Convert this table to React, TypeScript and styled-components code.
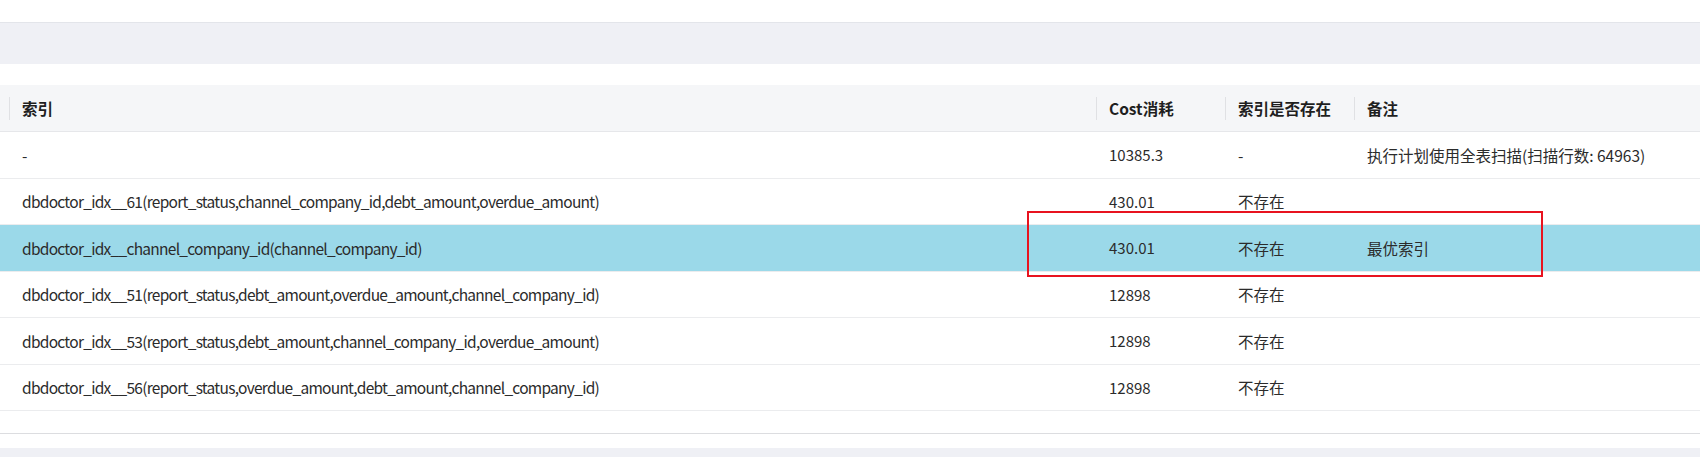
import React from "react";
import styled, { createGlobalStyle } from "styled-components";

const GlobalStyle = createGlobalStyle`
  html, body { margin: 0; padding: 0; background: #ffffff; }
  body {
    font-family: "Noto Sans CJK SC", "Noto Sans", sans-serif;
    color: #333333;
    width: 1700px;
    overflow: hidden;
  }
`;

const Page = styled.div`
  position: relative;
  width: 1700px;
  height: 457px;
  overflow: hidden;
  display: flex;
  flex-direction: column;
  & > * {
    flex-shrink: 0;
  }
`;

const TopStrip = styled.div`
  height: 22px;
  border-bottom: 1px solid #e3e5ea;
  background: #ffffff;
`;

const GrayBand = styled.div<{ $h?: number }>`
  height: ${(p) => (p.$h ? `${p.$h}px` : "auto")};
  flex: ${(p) => (p.$h ? "0 0 auto" : "1 1 auto")};
  background: #eff0f5;
`;

const WhiteGap = styled.div<{ $h: number; $line?: boolean }>`
  height: ${(p) => p.$h}px;
  background: #ffffff;
  border-bottom: ${(p) => (p.$line ? "1px solid #dcdde0" : "none")};
`;

const Table = styled.div`
  display: flex;
  flex-direction: column;
`;

const cols = "9px 1087px 129px 129px 1fr";

const HeaderRow = styled.div`
  display: grid;
  grid-template-columns: ${cols};
  height: 46px;
  background: #f5f6f8;
  border-bottom: 1px solid #e6e7ea;
`;

const HeadCell = styled.div<{ $divider?: boolean }>`
  position: relative;
  display: flex;
  align-items: center;
  padding-left: 13px;
  font-size: 15.5px;
  font-weight: 700;
  color: #1f1f1f;
  white-space: nowrap;
  &::before {
    content: "";
    display: ${(p) => (p.$divider ? "block" : "none")};
    position: absolute;
    left: 0;
    top: 12px;
    height: 23px;
    width: 1px;
    background: #e0e1e4;
  }
`;

const BodyRow = styled.div<{ $selected?: boolean }>`
  display: grid;
  grid-template-columns: ${cols};
  height: 46.5px;
  box-sizing: border-box;
  background: ${(p) => (p.$selected ? "#9bd9e9" : "#ffffff")};
  border-bottom: 1px solid #ebecee;
`;

const Cell = styled.div<{ $tight?: boolean; $num?: boolean }>`
  display: flex;
  align-items: center;
  padding-left: 13px;
  font-size: ${(p) => (p.$num ? "15px" : "15.5px")};
  letter-spacing: ${(p) => (p.$tight ? "-0.72px" : "0")};
  color: #2b2b2b;
  white-space: nowrap;
`;

const Annotation = styled.div`
  position: absolute;
  left: 1027px;
  top: 211px;
  width: 516px;
  height: 66px;
  box-sizing: border-box;
  border: 2px solid #e8131f;
  pointer-events: none;
`;

type Row = { name: string; cost: string; exists: string; note: string; selected?: boolean };

const rows: Row[] = [
  { name: "-", cost: "10385.3", exists: "-", note: "执行计划使用全表扫描(扫描行数: 64963)" },
  {
    name: "dbdoctor_idx__61(report_status,channel_company_id,debt_amount,overdue_amount)",
    cost: "430.01",
    exists: "不存在",
    note: "",
  },
  {
    name: "dbdoctor_idx__channel_company_id(channel_company_id)",
    cost: "430.01",
    exists: "不存在",
    note: "最优索引",
    selected: true,
  },
  {
    name: "dbdoctor_idx__51(report_status,debt_amount,overdue_amount,channel_company_id)",
    cost: "12898",
    exists: "不存在",
    note: "",
  },
  {
    name: "dbdoctor_idx__53(report_status,debt_amount,channel_company_id,overdue_amount)",
    cost: "12898",
    exists: "不存在",
    note: "",
  },
  {
    name: "dbdoctor_idx__56(report_status,overdue_amount,debt_amount,channel_company_id)",
    cost: "12898",
    exists: "不存在",
    note: "",
  },
];

export default function App() {
  return (
    <>
      <GlobalStyle />
      <Page>
        <TopStrip />
        <GrayBand $h={41} />
        <WhiteGap $h={21} />
        <Table>
          <HeaderRow>
            <HeadCell />
            <HeadCell $divider>索引</HeadCell>
            <HeadCell $divider>Cost消耗</HeadCell>
            <HeadCell $divider>索引是否存在</HeadCell>
            <HeadCell $divider>备注</HeadCell>
          </HeaderRow>
          {rows.map((r, i) => (
            <BodyRow key={i} $selected={r.selected}>
              <Cell />
              <Cell $tight>{r.name}</Cell>
              <Cell $num>{r.cost}</Cell>
              <Cell>{r.exists}</Cell>
              <Cell>{r.note}</Cell>
            </BodyRow>
          ))}
        </Table>
        <WhiteGap $h={22} $line />
        <WhiteGap $h={14} />
        <GrayBand />
        <Annotation />
      </Page>
    </>
  );
}
